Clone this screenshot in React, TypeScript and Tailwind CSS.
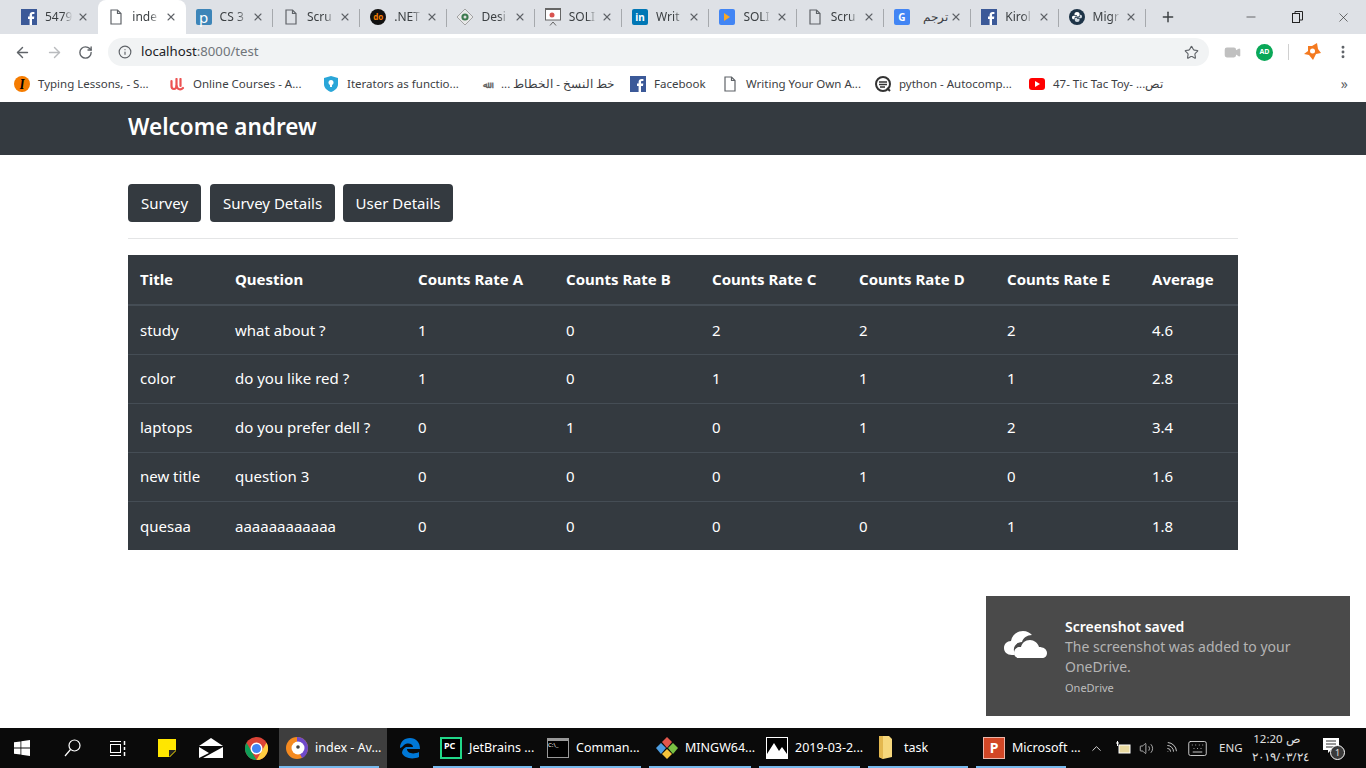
import { ArrowLeft, ArrowRight, ChevronUp, Info, MoreVertical, Plus, RotateCw, Star, Video, Volume2, Wifi, X, Keyboard, Minus } from "lucide-react";
import type { ReactNode } from "react";

const UI = "font-['Noto_Sans','Open_Sans',sans-serif]";

function Doc({ className = "" }: { className?: string }) {
  return (
    <svg width="12" height="16" viewBox="0 0 12 16" className={className} fill="none" stroke="#5f6368" strokeWidth="1.2">
      <path d="M1 1h6.5L11 4.5V15H1z" />
      <path d="M7.5 1v3.5H11" />
    </svg>
  );
}

function FbIcon({ size = 16 }: { size?: number }) {
  return (
    <svg width={size} height={size} viewBox="0 0 16 16">
      <rect width="16" height="16" fill="#3b5998" />
      <path d="M11 16v-6h2l.3-2.4H11V6.2c0-.7.2-1.1 1.2-1.1h1.2V3c-.3 0-1-.1-1.8-.1-1.8 0-3 1.1-3 3.100v1.600H7V10h1.600v6z" fill="#fff" />
    </svg>
  );
}

function Square({ bg, children, round = false }: { bg: string; children?: ReactNode; round?: boolean }) {
  return (
    <span
      className={`w-4 h-4 flex items-center justify-center text-white text-[10px] font-bold leading-none ${round ? "rounded-full" : "rounded-[2px]"}`}
      style={{ background: bg }}
    >
      {children}
    </span>
  );
}

const Diamond = () => (
  <svg width="16" height="16" viewBox="0 0 16 16">
    <path d="M8 0l8 8-8 8-8-8z" fill="#e8e8e8" stroke="#777" strokeWidth=".6" />
    <circle cx="8" cy="8" r="3.600" fill="#3d7a4e" />
    <circle cx="8" cy="8" r="1.500" fill="#ddd" />
  </svg>
);

const Slides = () => (
  <svg width="16" height="18" viewBox="0 0 16 18" fill="none">
    <rect x=".5" y="1" width="15" height="11" fill="#fff" stroke="#666" />
    <path d="M0 1h16" stroke="#666" strokeWidth="2" />
    <circle cx="7" cy="7" r="2.500" fill="#d9534f" />
    <path d="M8 14l-3 3.500M8 14l3 3.500" stroke="#666" />
  </svg>
);

const Python = () => (
  <svg width="16" height="16" viewBox="0 0 16 16">
    <circle cx="8" cy="8" r="8" fill="#1d3347" />
    <path d="M8 3c-2 0-2.500 1-2.500 2v1H8v.7H4.500C3.500 6.700 3 7.500 3 8.500s.6 1.800 1.500 1.800h1V9c0-1 .8-1.600 1.800-1.600h2c.8 0 1.300-.6 1.300-1.400V5c0-1.100-1-2-2.600-2z" fill="#fff" />
    <path d="M8 13c2 0 2.500-1 2.500-2v-1H8v-.7h3.500c1 0 1.500-.8 1.500-1.800s-.6-1.800-1.500-1.800h-.6V7c0 1-.8 1.700-1.800 1.700h-2C6.300 8.700 5.800 9.300 5.800 10v1c0 1.100 1 2 2.200 2z" fill="#cfd8e0" />
  </svg>
);

const tabs: { title: string; icon: ReactNode; active?: boolean; rtl?: boolean }[] = [
  { title: "5479", icon: <FbIcon /> },
  { title: "inde", icon: <Doc />, active: true },
  { title: "CS 3", icon: <Square bg="#3d85b8"><span className="text-[15px] font-normal">p</span></Square> },
  { title: "Scru", icon: <Doc /> },
  { title: ".NET", icon: <Square bg="#111" round><span className="text-[#f57c00] text-[8px]">do</span></Square> },
  { title: "Desi", icon: <Diamond /> },
  { title: "SOLI", icon: <Slides /> },
  { title: "Writ", icon: <Square bg="#0077b5">in</Square> },
  { title: "SOLI", icon: <Square bg="#4285f4"><span className="w-0 h-0 border-y-[4px] border-y-transparent border-l-[6px] border-l-[#f9a825]" /></Square> },
  { title: "Scru", icon: <Doc /> },
  { title: "ترجم", icon: <Square bg="#4285f4">G</Square>, rtl: true },
  { title: "Kirol", icon: <FbIcon /> },
  { title: "Migr", icon: <Python /> },
];

const bookmarks: { title: string; width: number; icon: ReactNode; rtl?: boolean }[] = [
  { title: "Typing Lessons, - S...", width: 155, icon: <Square bg="#f57c00" round><span className="text-black italic font-serif text-[13px]">I</span></Square> },
  {
    title: "Online Courses - A...",
    width: 154,
    icon: (
      <svg width="15" height="13" viewBox="0 0 15 13" fill="none" stroke="#ec5252" strokeWidth="2.200" strokeLinecap="round">
        <path d="M1.500 3v5c0 4 5 4 5 0V1" />
        <path d="M6.500 8c1 4 4.500 4 6.500 2" />
        <path d="M10.500 1v7" />
      </svg>
    ),
  },
  { title: "Iterators as functio...", width: 154, icon: <svg width="14" height="16" viewBox="0 0 14 16"><path d="M7 0l7 2v6c0 4-3 6.500-7 8-4-1.500-7-4-7-8V2z" fill="#2aa6d8" /><circle cx="7" cy="6.500" r="2.500" fill="#fff" /><path d="M6 8h2v3H6z" fill="#fff" /></svg> },
  { title: "خط النسخ - الخطاط ...", width: 153, icon: <span className="text-[#666] text-[9px] font-bold leading-none">ﷲ</span>, rtl: true },
  { title: "Facebook", width: 92, icon: <FbIcon /> },
  { title: "Writing Your Own A...", width: 153, icon: <Doc /> },
  { title: "python - Autocomp...", width: 154, icon: <svg width="16" height="16" viewBox="0 0 16 16" fill="none"><circle cx="8" cy="8" r="7" stroke="#333" strokeWidth="2" /><path d="M4 6h8M4 8.500h8M5 11h5" stroke="#333" strokeWidth="1.300" /><path d="M12 12l3 3" stroke="#333" strokeWidth="2" /></svg> },
  { title: "47- Tic Tac Toy- ...تص", width: 280, icon: <span className="w-4 h-3 rounded-[3px] bg-[#f00] flex items-center justify-center"><span className="w-0 h-0 border-y-[3px] border-y-transparent border-l-[5px] border-l-white" /></span> },
];

const rows = [
  ["study", "what about ?", "1", "0", "2", "2", "2", "4.6"],
  ["color", "do you like red ?", "1", "0", "1", "1", "1", "2.8"],
  ["laptops", "do you prefer dell ?", "0", "1", "0", "1", "2", "3.4"],
  ["new title", "question 3", "0", "0", "0", "1", "0", "1.6"],
  ["quesaa", "aaaaaaaaaaaa", "0", "0", "0", "0", "1", "1.8"],
];

const headers = ["Title", "Question", "Counts Rate A", "Counts Rate B", "Counts Rate C", "Counts Rate D", "Counts Rate E", "Average"];
const colWidths = ["w-[95px]", "w-[183px]", "w-[148px]", "w-[146px]", "w-[147px]", "w-[148px]", "w-[145px]", "w-[98px]"];

function TaskApp({ icon, label, width, active, underline = true }: { icon: ReactNode; label?: string; width: number; active?: boolean; underline?: boolean }) {
  return (
    <div className={`relative h-full flex items-center justify-start shrink-0 ${active ? "bg-[#3e3e3e]" : ""}`} style={{ width }}>
      <span className="w-[36px] flex justify-center shrink-0">{icon}</span>
      {label && <span className="text-[12.5px] text-white whitespace-nowrap">{label}</span>}
      {underline && <span className="absolute bottom-0 left-0 right-[8px] h-[2px] bg-[#76b9ed]" />}
    </div>
  );
}

export default function App() {
  return (
    <div className={`h-[768px] w-[1366px] overflow-hidden flex flex-col bg-white relative ${UI}`}>
      {/* tab strip */}
      <div className="h-[34px] shrink-0 bg-[#dee1e6] flex items-end pl-[11px]">
        {tabs.map((t, i) => (
          <div
            key={i}
            className={`relative h-[34px] w-[87.3px] shrink-0 flex items-center pl-[10px] pr-[9px] ${t.active ? "bg-white rounded-t-lg" : ""}`}
          >
            <span className="w-4 h-4 flex items-center justify-center shrink-0">{t.icon}</span>
            <span
              dir={t.rtl ? "rtl" : undefined}
              className={`ml-[8px] w-[30px] whitespace-nowrap text-[12px] text-[#3c4043] ${t.rtl ? "" : "[mask-image:linear-gradient(to_right,black_60%,transparent_92%)]"}`}
            >
              {t.title}
            </span>
            <X size={12} strokeWidth={2.2} className="ml-auto text-[#5f6368] shrink-0" />
            {i > 1 && <span className="absolute right-0 top-[9px] h-[18px] w-px bg-[#a6a9ad]" />}
          </div>
        ))}
        <div className="w-[44px] h-[34px] flex items-center justify-center shrink-0 text-[#3c4043]">
          <Plus size={16} strokeWidth={2.2} />
        </div>
        <div className="ml-auto h-[34px] flex items-center text-[#222]">
          <span className="w-[46px] flex justify-center"><Minus size={14} strokeWidth={1.1} /></span>
          <span className="w-[46px] flex justify-center">
            <svg width="11" height="12" viewBox="0 0 11 12" fill="none" stroke="#222"><rect x=".5" y="2.500" width="7" height="9" /><path d="M3 2.500V.5h7.500v8.500H7.500" /></svg>
          </span>
          <span className="w-[46px] flex justify-center"><X size={15} strokeWidth={1} /></span>
        </div>
      </div>

      {/* toolbar */}
      <div className="h-[36px] shrink-0 bg-white flex items-center">
        <div className="w-[108px] flex items-center pl-[14px] gap-[15px] text-[#5f6368]">
          <ArrowLeft size={17} strokeWidth={2} />
          <ArrowRight size={17} strokeWidth={2} className="text-[#b9bbbe]" />
          <RotateCw size={15} strokeWidth={2.2} />
        </div>
        <div className="w-[1101px] h-[28px] rounded-full bg-[#f1f3f4] flex items-center pl-[10px] pr-[10px]">
          <Info size={14} strokeWidth={2} className="text-[#5f6368]" />
          <span className="ml-[9px] text-[13.2px] text-[#202124]">localhost<span className="text-[#70757a]">:8000/test</span></span>
          <Star size={15} strokeWidth={1.8} className="ml-auto text-[#5f6368]" />
        </div>
        <div className="flex-1 flex items-center pl-[15px] text-[#5f6368]">
          <Video size={17} fill="#c0c0c0" stroke="#c0c0c0" />
          <span className="ml-[15px] w-[17px] h-[17px] rounded-full bg-[#0aa858] text-white text-[7px] font-bold flex items-center justify-center">AD</span>
          <span className="ml-[15px] h-[16px] w-px bg-[#d0d0d0]" />
          <svg width="18" height="18" viewBox="0 0 18 18" className="ml-[14px]">
            <path d="M9 3l5-3 1 6 3 4-5 1-3 6-4-5-5-1 4-3 0-5z" fill="#f47a20" />
            <circle cx="9.500" cy="8" r="2.500" fill="#fff" />
          </svg>
          <MoreVertical size={16} strokeWidth={2.4} className="ml-[14px]" />
        </div>
      </div>

      {/* bookmarks */}
      <div className="h-[32px] pb-[4px] shrink-0 bg-white flex items-center pl-[14px]">
        {bookmarks.map((b, i) => (
          <div key={i} className="flex items-center shrink-0" style={{ width: b.width }}>
            <span className="w-4 h-4 flex items-center justify-center shrink-0">{b.icon}</span>
            <span dir={b.rtl ? "rtl" : undefined} className="ml-[8px] text-[11.5px] text-[#3c4043] whitespace-nowrap">{b.title}</span>
          </div>
        ))}
        <span className="ml-auto mr-[18px] text-[14px] text-[#5f6368] leading-none">»</span>
      </div>

      {/* page */}
      <div className="flex-1 relative min-h-0">
        <div className="h-[53px] bg-[#343a40] pl-[128px] pb-[3px] flex items-center">
          <h1 className="text-[22.5px] font-semibold text-white leading-none">Welcome andrew</h1>
        </div>
        <div className="mx-[128px] pt-[29px]">
          <div className="flex">
            <button className="h-[38px] w-[73px] rounded bg-[#343a40] text-white text-[15px]">Survey</button>
            <button className="ml-[9px] h-[38px] w-[125px] rounded bg-[#343a40] text-white text-[15px]">Survey Details</button>
            <button className="ml-[8px] h-[38px] w-[110px] rounded bg-[#343a40] text-white text-[15px]">User Details</button>
          </div>
          <hr className="mt-[16px] border-t border-[#e4e5e6]" />
          <table className="mt-[16px] w-[1110px] table-fixed border-collapse bg-[#343a40] text-white text-[15px]">
            <thead>
              <tr className="h-[50px] border-b-2 border-[#454d55]">
                {headers.map((h, i) => (
                  <th key={h} className={`${colWidths[i]} pl-[12px] text-left font-bold whitespace-nowrap`}>{h}</th>
                ))}
              </tr>
            </thead>
            <tbody>
              {rows.map((r, i) => (
                <tr key={i} className={`h-[49px] ${i > 0 ? "border-t border-[#454d55]" : ""}`}>
                  {r.map((c, j) => (
                    <td key={j} className="pl-[12px] whitespace-nowrap">{c}</td>
                  ))}
                </tr>
              ))}
            </tbody>
          </table>
        </div>

        {/* onedrive toast */}
        <div className="absolute left-[986px] top-[494px] w-[364px] h-[120px] bg-[#4a4a4a] flex">
          <div className="w-[79px] pt-[34px] pl-[18px]">
            <svg width="44" height="28" viewBox="0 0 44 28" fill="#fff">
              <path d="M8 25C3 25 0 22 0 18c0-4 3-7 7-7 1-6 6-10 12-10 4 0 7 2 9 4-5 0-9 3-10 7-5 0-9 4-8 9 0 1 0 3 1 4z" />
              <path d="M15 28c-3 0-5-2-5-5s2-6 6-6h1c1-4 4-7 9-7 4 0 8 3 9 7 4 0 8 2 8 6 0 3-2 5-5 5z" />
            </svg>
          </div>
          <div className="pt-[21px]">
            <div className="text-[14px] font-semibold text-white leading-[20px]">Screenshot saved</div>
            <div className="text-[14px] text-[#b4b4b4] leading-[20px] w-[260px]">The screenshot was added to your OneDrive.</div>
            <div className="mt-[3px] text-[11px] text-[#bdbdbd] leading-[16px]">OneDrive</div>
          </div>
        </div>
      </div>

      {/* taskbar */}
      <div className="h-[40px] shrink-0 bg-[#0a0a0a] flex items-center text-white">
        <div className="w-[44px] flex justify-center">
          <svg width="16" height="16" viewBox="0 0 16 16" fill="#fff"><path d="M0 2.300l6.500-.9v6.200H0zM7.300 1.300L16 0v7.600H7.300zM0 8.400h6.500v6.200L0 13.700zM7.300 8.400H16V16l-8.700-1.300z" /></svg>
        </div>
        <div className="w-[56px] flex justify-center">
          <svg width="17" height="18" viewBox="0 0 17 18" fill="none" stroke="#fff" strokeWidth="1.200">
            <circle cx="10.500" cy="6.500" r="5.500" />
            <path d="M6.500 10.500L1 17" />
          </svg>
        </div>
        <div className="w-[36px] flex justify-center">
          <svg width="16" height="15" viewBox="0 0 16 15" fill="none" stroke="#fff"><path d="M0 .5h11M0 14.500h11" /><rect x=".5" y="3.500" width="10" height="8" /><path d="M14.500 0v4M14.500 6v3M14.500 11v4" strokeWidth="1.500" /></svg>
        </div>
        <div className="w-[62px] flex justify-center">
          <svg width="18" height="18" viewBox="0 0 18 18"><path d="M0 0h18v12l-6 6H0z" fill="#ffe600" /><path d="M11 18v-7h7z" fill="#222" /></svg>
        </div>
        <div className="w-[26px] flex justify-center shrink-0">
          <svg width="24" height="20" viewBox="0 0 24 20" fill="#fff" className="shrink-0"><path d="M12 0l12 8H0z" /><path d="M0 9l10 6L0 20zM24 9v11H4z" /></svg>
        </div>
        <div className="w-[55px] flex justify-center pl-[9px]">
          <svg width="23" height="23" viewBox="0 0 24 24">
            <circle cx="12" cy="12" r="12" fill="#db4437" />
            <path d="M12 24A12 12 0 0 1 1.600 6L7 15.500 12 24z" fill="#0f9d58" />
            <path d="M12 24l5-8.500L22.400 6A12 12 0 0 1 12 24z" fill="#ffcd40" />
            <circle cx="12" cy="12" r="5.500" fill="#4285f4" stroke="#fff" strokeWidth="1.500" />
          </svg>
        </div>
        <TaskApp
          width={108}
          active
          label="index - Av..."
          icon={
            <svg width="22" height="22" viewBox="0 0 22 22">
              <circle cx="11" cy="11" r="11" fill="#f58a1f" />
              <path d="M11 0a11 11 0 0 1 11 11c0 5-3 9-6 10l-5-10z" fill="#6e49c9" />
              <circle cx="12" cy="11" r="6.500" fill="#fff" />
              <circle cx="12" cy="10" r="1.800" fill="#444" />
            </svg>
          }
        />
        <div className="w-[46px] flex justify-center">
          <svg width="22" height="22" viewBox="0 0 22 22"><path d="M1 11C1 5 5 1 11 1c6 0 10 4 10 11H8c0 4 6 6 12 3v5c-7 3-15 1-17-4 0-3 2-5 4-6h7c0-3-5-5-9-2-1 1-3 3-4 3z" fill="#0078d7" /></svg>
        </div>
        <TaskApp width={107} label="JetBrains ..." icon={<span className="w-[22px] h-[22px] bg-black border-2 border-[#21d789] text-white text-[9px] font-bold leading-[9px] pl-[2px] pt-[2px]">PC</span>} />
        <TaskApp width={109} label="Comman..." icon={<span className="w-[22px] h-[20px] bg-black border border-[#999] border-t-[3px] text-white text-[6px] leading-[8px]">C:\_</span>} />
        <TaskApp
          width={110}
          label="MINGW64..."
          icon={
            <svg width="22" height="22" viewBox="0 0 22 22">
              <path d="M11 0l5 5-5 6-5-6z" fill="#e2574c" />
              <path d="M5 6l5 5-5 6-5-6z" fill="#4d9de0" />
              <path d="M17 6l5 5-5 6-5-6z" fill="#7ac143" />
              <path d="M11 12l5 5-5 5-5-5z" fill="#f5c33b" />
            </svg>
          }
        />
        <TaskApp
          width={109}
          label="2019-03-2..."
          icon={
            <svg width="22" height="22" viewBox="0 0 22 22">
              <rect x=".5" y=".5" width="21" height="21" fill="#000" stroke="#fff" />
              <path d="M1 21V17L8 6l5 8 3-4 5 7v4z" fill="#fff" />
            </svg>
          }
        />
        <TaskApp width={108} label="task" icon={<svg width="14" height="24" viewBox="0 0 14 24"><path d="M0 0h10l3 3v18l-9 2-4-2z" fill="#f6d77c" /><path d="M0 0h4v23l-4-2z" fill="#e3b74e" /></svg>} />
        <TaskApp width={98} label="Microsoft ..." icon={<span className="w-[22px] h-[22px] bg-[#d24726] border border-white/60 text-white text-[14px] font-bold leading-[20px] text-center">P</span>} />

        <div className="flex-1 flex items-center pl-[15px] text-[#e0e0e0]">
          <ChevronUp size={15} strokeWidth={1.5} />
          <svg width="16" height="14" viewBox="0 0 16 14" className="ml-[11px]"><rect x="4" y="4" width="11" height="8" fill="#e8d9a0" stroke="#fff" /><path d="M1 2h3M2.500 0v5" stroke="#fff" /></svg>
          <Volume2 size={15} strokeWidth={1.2} className="ml-[8px]" />
          <Wifi size={14} strokeWidth={1.4} className="ml-[10px] rotate-45" />
          <Keyboard size={21} strokeWidth={1} className="ml-[9px]" />
          <span className="ml-[11px] text-[11.5px] w-[28px]">ENG</span>
          <div className="ml-[5px] w-[50px] text-center text-[11.5px] leading-[18px] whitespace-nowrap">
            <div>12:20 ص</div>
            <div>٢٠١٩/٠٣/٢٤</div>
          </div>
          <div className="relative ml-[18px] w-[24px] h-[24px]">
            <svg width="16" height="16" viewBox="0 0 16 16" className="absolute left-[3px] top-[2px]"><path d="M0 0h16v12H8l-3 3v-3H0z" fill="#fff" /><path d="M3 3h10M3 6h10M3 9h8" stroke="#333" /></svg>
            <span className="absolute left-[10px] top-[9px] w-[15px] h-[15px] rounded-full bg-[#3a3a3a] border border-white text-[9px] leading-[13px] text-center">1</span>
          </div>
        </div>
      </div>
    </div>
  );
}
